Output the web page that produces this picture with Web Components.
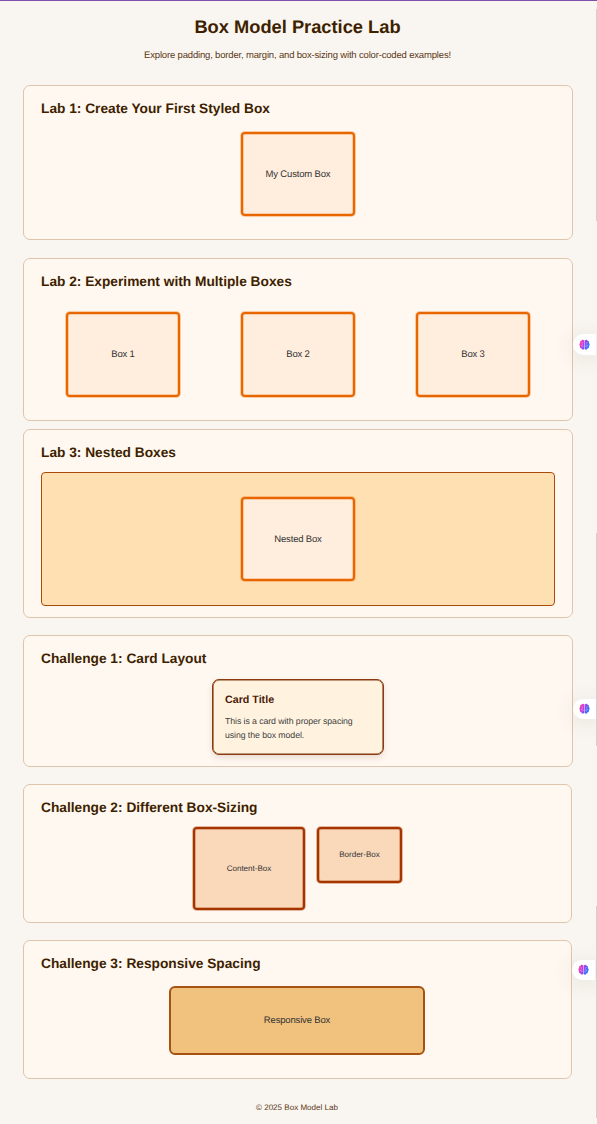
<!DOCTYPE html>
<html lang="en">
<head>
<meta charset="utf-8">
<title>Box Model Practice Lab</title>
<style>
html,body{margin:0;padding:0}
body{font-family:"Liberation Sans",Arial,sans-serif;background:#f9f5f0;color:#333;text-rendering:geometricPrecision}
</style>
</head>
<body>
<box-lab></box-lab>
<script>
const define = (name, html) => customElements.define(name, class extends HTMLElement {
  constructor() {
    super();
    const t = document.createElement('template');
    t.innerHTML = html;
    this.attachShadow({mode: 'open'}).appendChild(t.content.cloneNode(true));
  }
});

define('lab-header', `<style>
:host{display:block;text-align:center;color:#3e1f00;height:84px;padding-top:14px;box-sizing:border-box}
h1{font-size:18.3px;line-height:24px;margin:0;font-weight:700}
p{font-size:9.5px;letter-spacing:-.17px;line-height:14px;margin:10px 0 0;color:#5c3715}
</style><h1><slot name="title"></slot></h1><p><slot></slot></p>`);

define('lab-panel', `<style>
:host{display:block;box-sizing:border-box;width:550px;height:var(--h);margin-bottom:var(--gap,18px);padding:13px 17px 0;border:1px solid #dfc5ab;border-radius:7px;background:#fff8f1}
h2{font-size:13.72px;line-height:20px;margin:0;color:#3e1f00;font-weight:700}
.body{display:flex;justify-content:center;align-items:flex-start;gap:var(--between,0);padding-top:var(--lead,13px)}
</style><h2><slot name="title"></slot></h2><div class="body"><slot></slot></div>`);

define('demo-box', `<style>
:host{display:flex;align-items:center;justify-content:center;flex:none;box-sizing:border-box;width:var(--w,114px);height:var(--bh,84px);padding-top:var(--nudge,1px);border:2px solid var(--line,#e86600);border-radius:var(--r,4px);background:var(--fill,#ffeedd);font-size:var(--fs,9.5px);letter-spacing:var(--ls,-.17px);line-height:14px;color:#333;
box-shadow:0 0 0 1px var(--fringe,rgba(240,120,20,.36)),inset 0 0 0 1px var(--fringe,rgba(240,120,20,.3))}
</style><slot></slot>`);

define('nest-box', `<style>
:host{display:flex;justify-content:center;box-sizing:border-box;width:514px;height:134px;padding-top:24px;border:1px solid #aa4c08;border-radius:4px;background:#ffe0b2}
</style><slot></slot>`);

define('info-card', `<style>
:host{display:block;box-sizing:border-box;width:172px;height:76px;padding:13px 11.5px 0 12px;border:1px solid #8a3b12;border-radius:7px;background:#fff3e0;box-shadow:inset 0 0 0 .6px #8a3b12,0 3px 6px rgba(80,40,0,.13)}
h3{font-size:10.69px;line-height:14px;margin:0 0 8px;color:#4e1a08}
p{font-size:8.75px;letter-spacing:-.08px;line-height:13.6px;margin:0;color:#3d3d3d}
</style><h3><slot name="title"></slot></h3><p><slot></slot></p>`);

define('side-tab', `<style>
:host{position:absolute;left:var(--x,573px);top:var(--y);display:flex;align-items:center;box-sizing:border-box;width:22.5px;height:20.5px;padding-left:5.7px;background:#fff;border-radius:10.5px 0 0 10.5px;box-shadow:0 3px 22px rgba(70,60,50,.13)}
svg{display:block}
</style><svg width="11" height="11" viewBox="0 0 22 22">
<defs><linearGradient id="g" x1="0" y1="0" x2="22" y2="9" gradientUnits="userSpaceOnUse"><stop offset="0" stop-color="#ff8a30"/><stop offset=".3" stop-color="#f035c8"/><stop offset=".62" stop-color="#9148f0"/><stop offset="1" stop-color="#287cff"/></linearGradient></defs>
<path fill="#dcc4fa" d="M9.5 2h3v18h-3z"/>
<path fill="url(#g)" d="M10.3 3.5C9 .3 5.2.7 4.8 3.6 2.1 4 1.4 6.5 2.3 8.2.1 9.7.2 13.1 2.2 14.3c-.8 2.7.8 4.7 2.9 4.9.8 2.8 4.2 3.2 5.2.7zM11.7 3.5c1.3-3.2 5.1-2.8 5.5.1 2.7.4 3.4 2.9 2.5 4.6 2.2 1.5 2.1 4.9.1 6.1.8 2.7-.8 4.7-2.9 4.9-.8 2.8-4.2 3.2-5.2.7z"/>
<path fill="none" stroke="#fff" stroke-opacity=".6" stroke-width="1.3" d="M5 7q2 0 2.3 2M4 13q3 .5 3-2M7 16.5q0-2 2-2M17 7q-2 0-2.3 2M18 13q-3 .5-3-2M15 16.5q0-2-2-2"/></svg>`);

define('scroll-thumb', `<style>
:host{position:absolute;left:596px;top:var(--y);width:1px;height:var(--h);background:#d0d0d2}
</style>`);

define('box-lab', `<style>
:host{display:block;position:relative;box-sizing:border-box;width:597px;height:1124px;overflow:hidden;border-top:1px solid #7e51a8;background:#f9f6f1}
main{padding-left:23px}
lab-header{width:595px}
.narrow{width:549px}
footer{width:594px;text-align:center;font-size:8.05px;line-height:12px;padding-top:5px;color:#5c3715}
.row{--between:61px;--lead:20px}
.size{--line:#a43400;--fringe:rgba(180,70,10,.36);--fill:#fad9bb;--fs:8.05px;--ls:0;--nudge:0}
</style>
<lab-header><span slot="title">Box Model Practice Lab</span>Explore padding, border, margin, and box-sizing with color-coded examples!</lab-header>
<main>
<lab-panel style="--h:155px"><span slot="title">Lab 1: Create Your First Styled Box</span><demo-box>My Custom Box</demo-box></lab-panel>
<lab-panel class="row" style="--h:163px;--gap:8px"><span slot="title">Lab 2: Experiment with Multiple Boxes</span><demo-box style="--bh:85px">Box 1</demo-box><demo-box style="--bh:85px">Box 2</demo-box><demo-box style="--bh:85px">Box 3</demo-box></lab-panel>
<lab-panel style="--h:189px;--lead:9px;--gap:17px"><span slot="title">Lab 3: Nested Boxes</span><nest-box><demo-box>Nested Box</demo-box></nest-box></lab-panel>
<lab-panel style="--h:132px;--lead:10px;--gap:17px"><span slot="title">Challenge 1: Card Layout</span><info-card><span slot="title">Card Title</span>This is a card with proper spacing using the box model.</info-card></lab-panel>
<lab-panel class="narrow size" style="--h:139px;--lead:9px;--between:12px;--gap:17px"><span slot="title">Challenge 2: Different Box-Sizing</span><demo-box style="--w:112px;--bh:83px">Content-Box</demo-box><demo-box style="--w:85px;--bh:56px">Border-Box</demo-box></lab-panel>
<lab-panel class="narrow" style="--h:139px;--lead:12px"><span slot="title">Challenge 3: Responsive Spacing</span><demo-box style="margin-right:1px;--w:256px;--bh:69px;--r:6px;--line:#a65312;--fringe:transparent;--fill:#f1c27d">Responsive Box</demo-box></lab-panel>
</main>
<footer>© 2025 Box Model Lab</footer>
<side-tab style="--y:333px"></side-tab>
<side-tab style="--y:697.5px"></side-tab>
<side-tab style="--x:572px;--y:958.5px"></side-tab>
<scroll-thumb style="--y:8px;--h:212px"></scroll-thumb>
<scroll-thumb style="--y:532px;--h:213px"></scroll-thumb>
<scroll-thumb style="--y:905px;--h:212px"></scroll-thumb>`);
</script>
</body>
</html>
